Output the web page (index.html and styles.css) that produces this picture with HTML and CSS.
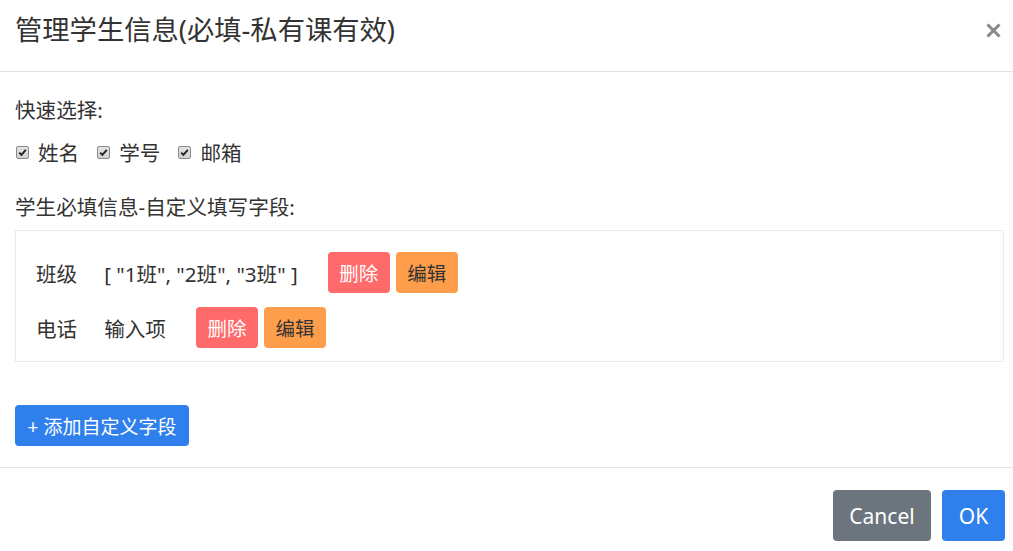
FILE: index.html
```html
<!DOCTYPE html>
<html lang="zh">
<head>
<meta charset="utf-8">
<title>管理学生信息</title>
<link rel="stylesheet" href="styles.css">
</head>
<body>
<div class="modal">
  <div class="modal-header">
    <h5 class="modal-title">管理学生信息(必填-私有课有效)</h5>
    <button class="close" type="button" aria-label="Close">
      <svg width="15" height="15" viewBox="0 0 15 15"><path d="M1.5 1.5L13.5 13.5M13.5 1.5L1.5 13.5" stroke="#888" stroke-width="3" stroke-linecap="butt"/></svg>
    </button>
  </div>
  <div class="modal-body">
    <div class="label">快速选择:</div>
    <div class="checks">
      <label class="check"><span class="box"><svg width="9" height="9" viewBox="0 0 9 9"><path d="M1.2 4.6L3.4 6.8L7.8 1.8" fill="none" stroke="#222" stroke-width="1.9"/></svg></span><span>姓名</span></label>
      <label class="check"><span class="box"><svg width="9" height="9" viewBox="0 0 9 9"><path d="M1.2 4.6L3.4 6.8L7.8 1.8" fill="none" stroke="#222" stroke-width="1.9"/></svg></span><span>学号</span></label>
      <label class="check"><span class="box"><svg width="9" height="9" viewBox="0 0 9 9"><path d="M1.2 4.6L3.4 6.8L7.8 1.8" fill="none" stroke="#222" stroke-width="1.9"/></svg></span><span>邮箱</span></label>
    </div>
    <div class="label section">学生必填信息-自定义填写字段:</div>
    <div class="fields">
      <div class="field">
        <span class="f-name">班级</span>
        <span class="f-value">[ "1班", "2班", "3班" ]</span>
        <button class="btn btn-del">删除</button>
        <button class="btn btn-edit">编辑</button>
      </div>
      <div class="field">
        <span class="f-name">电话</span>
        <span class="f-value">输入项</span>
        <button class="btn btn-del">删除</button>
        <button class="btn btn-edit">编辑</button>
      </div>
    </div>
    <button class="btn btn-add">+ 添加自定义字段</button>
  </div>
  <div class="modal-footer">
    <button class="btn btn-cancel">Cancel</button>
    <button class="btn btn-ok">OK</button>
  </div>
</div>
</body>
</html>
```

FILE: styles.css
```css
* { box-sizing: border-box; }
html, body { margin: 0; padding: 0; background: #fff; }
body {
  font-family: "Noto Sans", "Noto Sans CJK SC", sans-serif;
  color: #333;
  font-size: 20.6px;
  width: 1013px;
  height: 551px;
  overflow: hidden;
}
.modal { display: flex; flex-direction: column; }
.modal-header {
  height: 72px;
  border-bottom: 1px solid #e3e3e3;
  display: flex;
  align-items: center;
  justify-content: space-between;
  padding: 0 12px 10px 15px;
}
.modal-title {
  margin: 0;
  font-size: 27.3px;
  font-weight: 400;
  line-height: 1.2;
  color: #333;
}
.close {
  border: 0;
  background: none;
  padding: 0;
  width: 15px;
  height: 15px;
  display: flex;
}
.modal-body {
  padding: 22px 9px 21px 15px;
  display: flex;
  flex-direction: column;
  align-items: flex-start;
}
.label { line-height: 32px; height: 32px; }
.section { margin-top: 23px; }
.checks { display: flex; margin-top: 10px; height: 32px; align-items: center; }
.check { display: flex; align-items: center; margin-right: 17px; }
.box {
  width: 13px;
  height: 13px;
  margin: 1px 9px 0 1px;
  border: 1px solid #8a8a8a;
  border-radius: 2px;
  background: linear-gradient(#e4e4e4, #d2d2d2);
  display: flex;
  align-items: center;
  justify-content: center;
}
.fields {
  margin-top: 7px;
  align-self: stretch;
  border: 1px solid #ebebeb;
  padding: 21px 20px 13px 20px;
  display: flex;
  flex-direction: column;
  gap: 14px;
}
.field { display: flex; align-items: center; height: 41px; }
.f-name { margin-right: 27px; }
.f-value { margin-right: 30px; }
.btn {
  font-family: inherit;
  border: 0;
  border-radius: 4px;
  cursor: pointer;
  display: inline-flex;
  align-items: center;
  justify-content: center;
}
.btn-del, .btn-edit {
  width: 62px;
  height: 41px;
  font-size: 19.5px;
  padding: 0;
}
.btn-del { background: #ff6a6a; color: #fff; margin-right: 6px; }
.btn-edit { background: #ff9e4a; color: #333; }
.btn-add {
  margin-top: 43px;
  background: #2f80ed;
  color: #fff;
  height: 41px;
  width: 174px;
  font-size: 19px;
  padding: 0;
}
.modal-footer {
  border-top: 1px solid #e3e3e3;
  padding: 22px 8px 0 0;
  display: flex;
  justify-content: flex-end;
  gap: 11px;
}
.btn-cancel, .btn-ok {
  height: 51px;
  font-size: 21px;
  padding: 0;
}
.btn-cancel { background: #6c757d; color: #fff; width: 98px; }
.btn-ok { background: #2f80ed; color: #fff; width: 63px; }
```
